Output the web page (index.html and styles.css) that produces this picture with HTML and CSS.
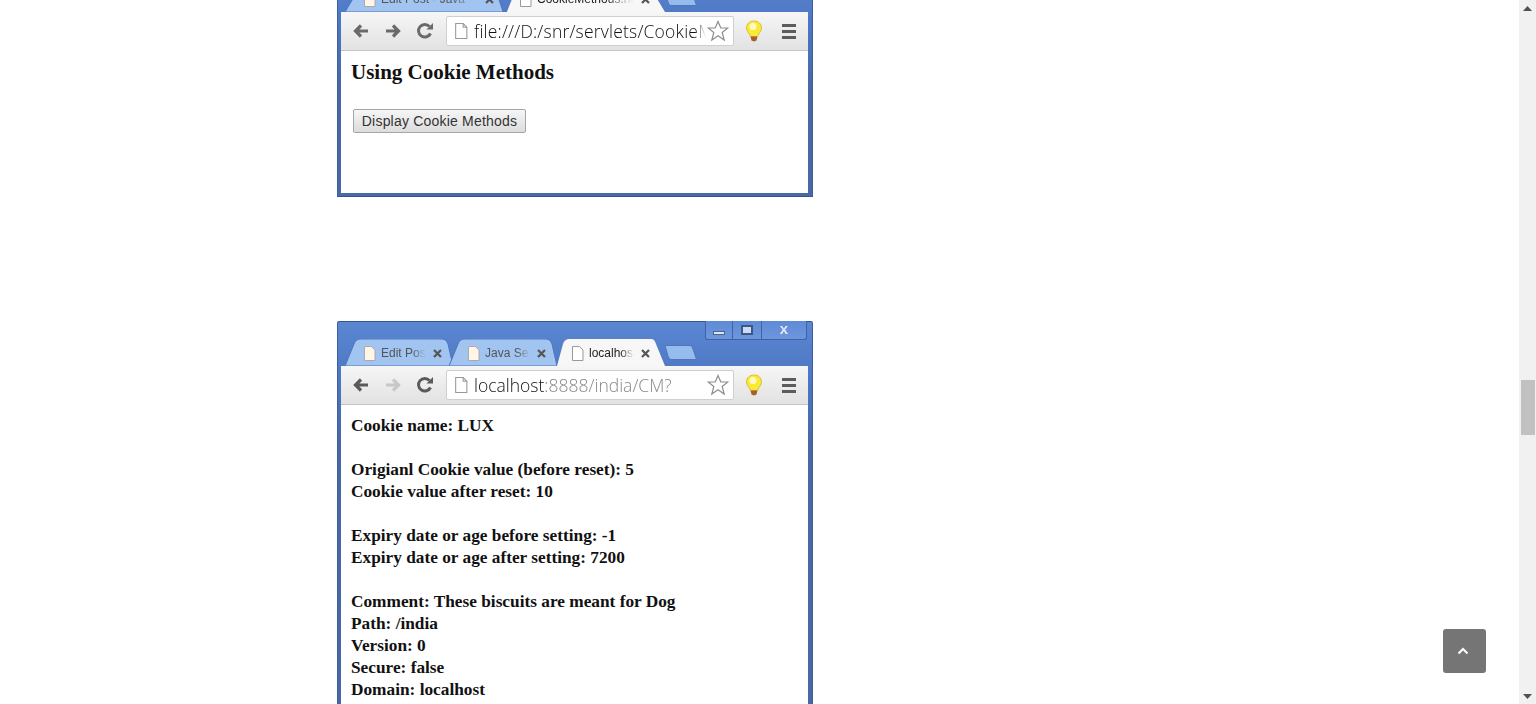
FILE: index.html
```html
<!DOCTYPE html>
<html lang="en">
<head>
<meta charset="utf-8">
<title>Cookie Methods</title>
<link rel="stylesheet" href="styles.css">
</head>
<body>
<main class="post">
  <section class="win win-first">
    <div class="titlebar">
      <div class="tabs tabs-wide">
        <div class="tab">
          <svg class="tab-shape" viewBox="0 0 112 27" preserveAspectRatio="none"><path d="M0 27 9 5C10 2 12 0 16 0H97C100 0 102 2 103 5L108 27Z" fill="#a2c4f0" stroke="#4f76bb" vector-effect="non-scaling-stroke"/></svg>
          <svg class="page" viewBox="0 0 13 15"><path d="M1.500 .5H8.500L12 4V14.500H1.500Z" fill="#fff6e8" stroke="#aaa"/></svg>
          <span class="tab-text">Edit Post - Java</span>
          <svg class="close" viewBox="0 0 9 9"><path d="M1 1 8 8M8 1 1 8" stroke="#555" stroke-width="2.200"/></svg>
        </div>
        <div class="tab tab-on">
          <svg class="tab-shape" viewBox="0 0 112 27" preserveAspectRatio="none"><path d="M4 27 10 5C11 2 13 0 17 0H98C101 0 102 2 103 5L112 27Z" fill="#f7f7f7"/></svg>
          <svg class="page" viewBox="0 0 13 15"><path d="M1.500 .5H8.500L12 4V14.500H1.500Z" fill="#fff" stroke="#999"/></svg>
          <span class="tab-text">CookieMethods.html</span>
          <svg class="close" viewBox="0 0 9 9"><path d="M1 1 8 8M8 1 1 8" stroke="#555" stroke-width="2.200"/></svg>
        </div>
        <svg class="newtab" viewBox="0 0 33 15"><path d="M1 .5H25C27 .5 28 1 29 4L32.500 14.500H8C6 14.500 5 14 4 11Z" fill="#95bcee" stroke="#4f76bb"/></svg>
      </div>
    </div>
    <div class="toolbar">
      <svg class="nav" viewBox="0 0 18 18"><path d="M16 9H4M9 3.500 3.500 9 9 14.500" fill="none" stroke="#6a6a6a" stroke-width="3.200"/></svg>
      <svg class="nav" viewBox="0 0 18 18"><path d="M2 9H14M9 3.500 14.500 9 9 14.500" fill="none" stroke="#6a6a6a" stroke-width="3.200"/></svg>
      <svg class="nav" viewBox="0 0 18 18"><path d="M14.500 11.500A6.300 6.300 0 1 1 13.500 4.500" fill="none" stroke="#6a6a6a" stroke-width="3"/><path d="M10.500 7.500H17V1Z" fill="#6a6a6a"/></svg>
      <div class="omnibox">
        <svg class="page page-url" viewBox="0 0 13 15"><path d="M1.500 .5H8.500L12 4V14.500H1.500Z" fill="#fff" stroke="#999"/><path d="M8.500 .5V4H12" fill="none" stroke="#999"/></svg>
        <span class="url url-file"><span class="url-dark">file:///D:/snr/servlets/CookieMethods.html</span></span>
        <svg class="star" viewBox="0 0 22 22"><path d="M11 1.500 13.800 8H20.800L15.200 12.500 17.200 20 11 15.800 4.800 20 6.800 12.500 1.200 8H8.200Z" fill="#fff" stroke="#8d8d8d" stroke-width="1.200"/></svg>
      </div>
      <svg class="bulb" viewBox="0 0 18 22"><path d="M9 1C4.500 1 1.500 4 1.500 8 1.500 11.500 4.500 13 5.500 16.500H12.500C13.500 13 16.500 11.500 16.500 8 16.500 4 13.500 1 9 1Z" fill="#f9ea38" stroke="#d8b020" stroke-width=".8"/><ellipse cx="8" cy="6.500" rx="3.500" ry="3.500" fill="#fffbc0"/><path d="M5.500 16.500H12.500L11.500 20.500 9 21.500 6.500 20.500Z" fill="#a4602a"/></svg>
      <div class="menu"><i></i><i></i><i></i></div>
    </div>
    <div class="page-body first-body">
      <h3 class="heading">Using Cookie Methods</h3>
      <button class="demo-btn" type="button">Display Cookie Methods</button>
    </div>
  </section>

  <section class="win win-second">
    <div class="titlebar">
      <div class="winbtns"><span class="wb wb-min"><i></i></span><span class="wb wb-max"><i></i></span><span class="wb wb-close">x</span></div>
      <div class="tabs">
        <div class="tab">
          <svg class="tab-shape" viewBox="0 0 112 27" preserveAspectRatio="none"><path d="M0 27 9 5C10 2 12 0 16 0H97C100 0 102 2 103 5L108 27Z" fill="#a2c4f0" stroke="#4f76bb"/></svg>
          <svg class="page" viewBox="0 0 13 15"><path d="M1.500 .5H8.500L12 4V14.500H1.500Z" fill="#fff6e8" stroke="#aaa"/></svg>
          <span class="tab-text">Edit Post - Java</span>
          <svg class="close" viewBox="0 0 9 9"><path d="M1 1 8 8M8 1 1 8" stroke="#555" stroke-width="2.200"/></svg>
        </div>
        <div class="tab">
          <svg class="tab-shape" viewBox="0 0 112 27" preserveAspectRatio="none"><path d="M0 27 9 5C10 2 12 0 16 0H97C100 0 102 2 103 5L108 27Z" fill="#a2c4f0" stroke="#4f76bb"/></svg>
          <svg class="page" viewBox="0 0 13 15"><path d="M1.500 .5H8.500L12 4V14.500H1.500Z" fill="#fff6e8" stroke="#aaa"/></svg>
          <span class="tab-text">Java Servlets</span>
          <svg class="close" viewBox="0 0 9 9"><path d="M1 1 8 8M8 1 1 8" stroke="#555" stroke-width="2.200"/></svg>
        </div>
        <div class="tab tab-on">
          <svg class="tab-shape" viewBox="0 0 112 27" preserveAspectRatio="none"><path d="M4 27 10 5C11 2 13 0 17 0H98C101 0 102 2 103 5L112 27Z" fill="#f7f7f7"/></svg>
          <svg class="page" viewBox="0 0 13 15"><path d="M1.500 .5H8.500L12 4V14.500H1.500Z" fill="#fff" stroke="#999"/></svg>
          <span class="tab-text">localhost:8888</span>
          <svg class="close" viewBox="0 0 9 9"><path d="M1 1 8 8M8 1 1 8" stroke="#555" stroke-width="2.200"/></svg>
        </div>
        <svg class="newtab" viewBox="0 0 33 15"><path d="M1 .5H25C27 .5 28 1 29 4L32.500 14.500H8C6 14.500 5 14 4 11Z" fill="#95bcee" stroke="#4f76bb"/></svg>
      </div>
    </div>
    <div class="toolbar">
      <svg class="nav" viewBox="0 0 18 18"><path d="M16 9H4M9 3.500 3.500 9 9 14.500" fill="none" stroke="#5a5a5a" stroke-width="3.200"/></svg>
      <svg class="nav" viewBox="0 0 18 18"><path d="M2 9H14M9 3.500 14.500 9 9 14.500" fill="none" stroke="#c8c8c8" stroke-width="3.200"/></svg>
      <svg class="nav" viewBox="0 0 18 18"><path d="M14.500 11.500A6.300 6.300 0 1 1 13.500 4.500" fill="none" stroke="#5a5a5a" stroke-width="3"/><path d="M10.500 7.500H17V1Z" fill="#5a5a5a"/></svg>
      <div class="omnibox">
        <svg class="page page-url" viewBox="0 0 13 15"><path d="M1.500 .5H8.500L12 4V14.500H1.500Z" fill="#fff" stroke="#999"/><path d="M8.500 .5V4H12" fill="none" stroke="#999"/></svg>
        <span class="url"><span class="url-dark">localhost</span><span class="url-dim">:8888/india/CM?</span></span>
        <svg class="star" viewBox="0 0 22 22"><path d="M11 1.500 13.800 8H20.800L15.200 12.500 17.200 20 11 15.800 4.800 20 6.800 12.500 1.200 8H8.200Z" fill="#fff" stroke="#8d8d8d" stroke-width="1.200"/></svg>
      </div>
      <svg class="bulb" viewBox="0 0 18 22"><path d="M9 1C4.500 1 1.500 4 1.500 8 1.500 11.500 4.500 13 5.500 16.500H12.500C13.500 13 16.500 11.500 16.500 8 16.500 4 13.500 1 9 1Z" fill="#f9ea38" stroke="#d8b020" stroke-width=".8"/><ellipse cx="8" cy="6.500" rx="3.500" ry="3.500" fill="#fffbc0"/><path d="M5.500 16.500H12.500L11.500 20.500 9 21.500 6.500 20.500Z" fill="#a4602a"/></svg>
      <div class="menu"><i></i><i></i><i></i></div>
    </div>
    <div class="page-body output">
      <p>Cookie name: LUX</p>
      <p>Origianl Cookie value (before reset): 5<br>Cookie value after reset: 10</p>
      <p>Expiry date or age before setting: -1<br>Expiry date or age after setting: 7200</p>
      <p>Comment: These biscuits are meant for Dog<br>Path: /india<br>Version: 0<br>Secure: false<br>Domain: localhost</p>
    </div>
  </section>
</main>

<a class="to-top" href="#" aria-label="Back to top">
  <svg viewBox="0 0 12 8"><path d="M1.500 6.500 6 2 10.500 6.500" fill="none" stroke="#fff" stroke-width="2"/></svg>
</a>

<div class="scrollbar">
  <svg class="sb-arrow sb-arrow-up" viewBox="0 0 9 5"><path d="M0 5H9L4.500 0Z" fill="#505050"/></svg>
  <div class="sb-thumb"></div>
  <svg class="sb-arrow sb-arrow-down" viewBox="0 0 9 5"><path d="M0 0H9L4.500 5Z" fill="#505050"/></svg>
</div>
</body>
</html>
```

FILE: styles.css
```css
html, body {
  margin: 0;
  height: 704px;
  overflow: hidden;
  background: #fff;
}

.post {
  width: 476px;
  margin-left: 337px;
  display: flex;
  flex-direction: column;
  gap: 124px;
}

.win {
  width: 476px;
  box-sizing: border-box;
  border: 1px solid #3e5f9e;
  border-top-color: #35558f;
  border-bottom-width: 0;
  padding: 0 4px 4px 3px;
  background: linear-gradient(#5b86d2, #4c76c2 60px, #4868a6 120px);
  filter: blur(.4px);
  border-radius: 2px 2px 0 0;
}

.win-first {
  margin-top: -33px;
  height: 230px;
  border-bottom: 1px solid #35558f;
  padding-bottom: 3px;
}

.win-second { height: 420px; flex: none; }

.titlebar {
  height: 44px;
  position: relative;
  display: flex;
  align-items: flex-end;
}

.winbtns {
  position: absolute;
  top: -1px;
  right: 1px;
  width: 102px;
  height: 19px;
  box-sizing: border-box;
  display: flex;
  border: 1px solid #3d62a8;
  border-top: 0;
  border-radius: 0 0 3px 3px;
  background: linear-gradient(#5f8ad6, #6d96dc);
}

.wb {
  display: flex;
  align-items: center;
  justify-content: center;
  border-right: 1px solid #3d62a8;
  color: #dfe7f5;
  font: bold 15px/1 "Liberation Sans", sans-serif;
}

.wb-min { width: 26px; }
.wb-max { width: 28px; }
.wb-close { flex: 1; border-right: 0; padding-bottom: 3px; }

.wb-min i {
  width: 12px;
  height: 4px;
  margin-top: 6px;
  background: #dfe6f2;
  border: 1px solid #4a658f;
  box-sizing: border-box;
}

.wb-max i {
  width: 12px;
  height: 10px;
  box-sizing: border-box;
  border: 2px solid #3c5888;
  background: #cfdaf0;
}

.tabs {
  display: flex;
  align-items: flex-end;
  padding-left: 4px;
}

.tab {
  position: relative;
  width: 112px;
  height: 27px;
  margin-right: -8px;
  display: flex;
  align-items: center;
  padding: 1px 0 0 18px;
  box-sizing: border-box;
  flex: none;
}

.tabs-wide .tab { width: 164px; }
.tabs-wide .tab-text { width: 97px; }

.tab-on { z-index: 1; }

.tab-shape {
  position: absolute;
  inset: 0;
  width: 100%;
  height: 100%;
}

.page {
  position: relative;
  width: 13px;
  height: 15px;
  flex: none;
}

.tab-text {
  position: relative;
  width: 45px;
  margin-left: 5px;
  overflow: hidden;
  white-space: nowrap;
  font: 12px/15px "Liberation Sans", sans-serif;
  color: #555;
  -webkit-mask-image: linear-gradient(90deg, #000 70%, transparent);
  mask-image: linear-gradient(90deg, #000 70%, transparent);
}

.tab-on .tab-text { color: #222; }

.close {
  position: relative;
  width: 9px;
  height: 9px;
  margin-left: 7px;
  flex: none;
}

.newtab {
  width: 33px;
  height: 15px;
  margin: 0 0 6px 7px;
  flex: none;
}

.toolbar {
  height: 39px;
  display: flex;
  align-items: center;
  padding-left: 11px;
  background: linear-gradient(#f6f6f6, #e2e2e2);
  border-bottom: 1px solid #c4c4c4;
  box-sizing: border-box;
  position: relative;
}

.nav {
  width: 18px;
  height: 18px;
  margin-right: 14px;
  flex: none;
}

.omnibox {
  width: 288px;
  height: 30px;
  margin-left: -2px;
  box-sizing: border-box;
  background: #fff;
  border: 1px solid #cfcfcf;
  border-radius: 2px;
  display: flex;
  align-items: center;
  padding-left: 7px;
}

.page-url {
  width: 14px;
  height: 16px;
}

.url {
  width: 232px;
  margin-left: 6px;
  overflow: hidden;
  white-space: nowrap;
  font: 300 17.500px/24px "Open Sans", sans-serif;
  color: #111;
  -webkit-mask-image: linear-gradient(90deg, #000 95%, transparent);
  mask-image: linear-gradient(90deg, #000 95%, transparent);
}

.url-file { letter-spacing: .2px; }
.url-dim { color: #888; }

.star {
  width: 22px;
  height: 22px;
  margin-left: 1px;
  flex: none;
}

.bulb {
  width: 18px;
  height: 22px;
  margin-left: 11px;
  flex: none;
}

.menu {
  display: flex;
  flex-direction: column;
  gap: 3px;
  margin-left: 19px;
}

.menu i {
  display: block;
  width: 14px;
  height: 3px;
  background: #5c5c5c;
}

.page-body {
  background: #fff;
  color: #111;
  font-family: "Liberation Serif", serif;
  font-weight: bold;
}

.first-body {
  height: 142px;
  padding: 9px 10px 0;
  box-sizing: border-box;
}

.heading {
  margin: 0;
  font-size: 21px;
  line-height: 24px;
}

.demo-btn {
  display: block;
  margin: 25px 0 0 2px;
  width: 173px;
  height: 24px;
  padding: 0;
  box-sizing: border-box;
  border: 1px solid #a5a5a5;
  border-radius: 2px;
  background: linear-gradient(#f6f6f6, #dcdcdc);
  font: 14px/20px "Liberation Sans", sans-serif;
  letter-spacing: .2px;
  color: #333;
}

.output {
  height: 320px;
  padding: 10px 10px 0;
  box-sizing: border-box;
  font-size: 17.300px;
  line-height: 22px;
}

.output p { margin: 0 0 22px; }

.to-top {
  position: fixed;
  left: 1442.500px;
  top: 629px;
  width: 43.500px;
  height: 44px;
  display: flex;
  align-items: center;
  justify-content: center;
  background: #757575;
  border-radius: 3px;
}

.to-top svg { width: 12px; height: 8px; margin-right: 2px; }

.scrollbar {
  position: fixed;
  top: 0;
  right: 0;
  width: 17px;
  height: 704px;
  background: #f1f1f1;
}

.sb-thumb {
  position: absolute;
  top: 380px;
  left: 2px;
  width: 14px;
  height: 55px;
  background: #c1c1c1;
}

.sb-arrow {
  position: absolute;
  left: 4px;
  width: 9px;
  height: 5px;
}

.sb-arrow-up { top: 6px; }
.sb-arrow-down { bottom: 5px; }
```
